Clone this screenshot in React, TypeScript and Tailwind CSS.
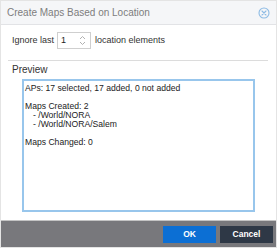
import React from "react";

export default function App() {
  const font = { fontFamily: '"Liberation Sans", Arial, sans-serif' };
  return (
    <div
      className="w-[277px] h-[248px] flex flex-col bg-white border border-[#e4e4e4] overflow-hidden"
      style={font}
    >
      <div className="h-[24px] shrink-0 bg-[#f5f6f8] border-b border-[#e2e3e6] flex items-center justify-between pl-[6px] pr-[6px]">
        <span className="text-[10px] leading-[12px] text-[#7d7d7d]">Create Maps Based on Location</span>
        <svg width="12" height="12" viewBox="0 0 12 12" fill="none">
          <circle cx="6" cy="6" r="5" stroke="#8dbbe4" strokeWidth="1.1" />
          <path d="M4 4 L8 8 M8 4 L4 8" stroke="#8dbbe4" strokeWidth="1.1" strokeLinecap="round" />
        </svg>
      </div>

      <div className="flex-1 flex flex-col">
        <div className="mt-[7px] h-[17px] flex items-center pl-[11px] text-[9px] text-[#333]">
          <span>Ignore last</span>
          <div className="ml-[3px] w-[34px] h-[17px] border border-[#cfcfcf] bg-white flex items-center justify-between pl-[3px] pr-[4px]">
            <span className="text-[9px] text-[#222]">1</span>
            <svg width="7" height="11" viewBox="0 0 7 11" fill="none">
              <path d="M1 4 L3.5 1.5 L6 4" stroke="#a8a8a8" strokeWidth="0.9" />
              <path d="M1 7 L3.5 9.5 L6 7" stroke="#a8a8a8" strokeWidth="0.9" />
            </svg>
          </div>
          <span className="ml-[4px]">location elements</span>
        </div>

        <div className="mt-[11px] ml-[7px] mr-[8px] h-px bg-[#dcdcdc]" />

        <div className="mt-[3px] pl-[11px] text-[10px] leading-[12px] text-[#333]">Preview</div>

        <div className="mt-[3px] ml-[21px] w-[233px] h-[133px] border-2 border-[#98c6ec] bg-white pl-[1px] pt-[3px] text-[8.6px] leading-[9px] text-[#222]">
          <div>APs: 17 selected, 17 added, 0 not added</div>
          <div className="h-[9px]" />
          <div>Maps Created: 2</div>
          <div className="pl-[8px]">- /World/NORA</div>
          <div className="pl-[8px]">- /World/NORA/Salem</div>
          <div className="h-[9px]" />
          <div>Maps Changed: 0</div>
        </div>
      </div>

      <div className="h-[27px] shrink-0 bg-[#78787c] border-t border-[#c4c4c4] flex items-start justify-end gap-[4px] pr-[3px] pt-[5px]">
        <button className="w-[53px] h-[17px] bg-[#0c6fd4] text-white text-[8.5px] font-bold flex items-center justify-center">
          OK
        </button>
        <button className="w-[53px] h-[17px] bg-[#2e3846] text-white text-[8.5px] font-bold flex items-center justify-center">
          Cancel
        </button>
      </div>
    </div>
  );
}
